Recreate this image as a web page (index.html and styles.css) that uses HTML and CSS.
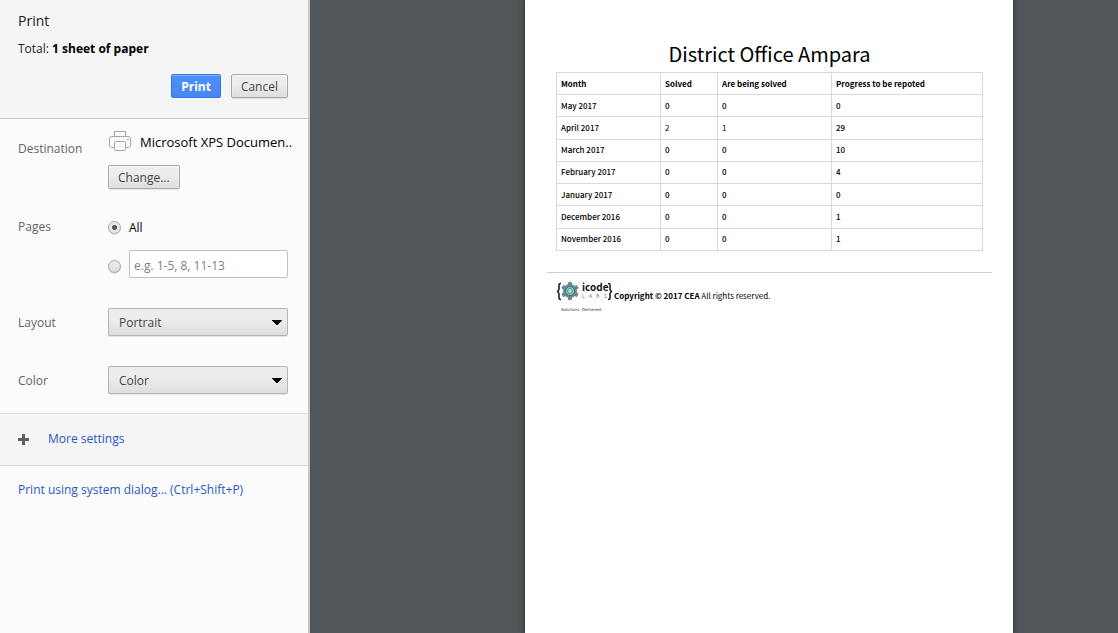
FILE: index.html
```html
<!DOCTYPE html>
<html lang="en">
<head>
<meta charset="utf-8">
<title>Print</title>
<link rel="stylesheet" href="styles.css">
</head>
<body>
<div class="app">
  <aside class="sidebar">
    <header class="summary">
      <h1 class="title">Print</h1>
      <p class="total">Total: <b>1 sheet of paper</b></p>
      <div class="actions">
        <button class="btn primary" type="button">Print</button>
        <button class="btn" type="button">Cancel</button>
      </div>
    </header>
    <form class="settings">
      <section class="row destination">
        <h2 class="label">Destination</h2>
        <div class="field">
          <div class="printer">
            <svg class="printer-icon" width="24" height="24" viewBox="0 0 24 24" fill="#fbfbfb" stroke="#a6a6a6" aria-hidden="true">
              <path d="M6.500 6.500v-5h11v5"/>
              <rect x="1.500" y="6.500" width="21" height="11" rx="2"/>
              <rect x="6.500" y="11.500" width="11" height="9" rx="1"/>
              <path d="M19 9.500h2"/>
            </svg>
            <span>Microsoft XPS Documen..</span>
          </div>
          <button class="btn" type="button">Change...</button>
        </div>
      </section>
      <section class="row pages">
        <h2 class="label">Pages</h2>
        <div class="field">
          <label class="choice all"><input class="radio" type="radio" name="pages" checked><span>All</span></label>
          <div class="choice range">
            <input class="radio" type="radio" name="pages" aria-label="Page range">
            <input class="text" type="text" placeholder="e.g. 1-5, 8, 11-13" aria-label="Pages to print">
          </div>
        </div>
      </section>
      <section class="row choose">
        <label class="label" for="layout">Layout</label>
        <select class="select" id="layout"><option>Portrait</option><option>Landscape</option></select>
      </section>
      <section class="row choose">
        <label class="label" for="color">Color</label>
        <select class="select" id="color"><option>Color</option><option>Black and white</option></select>
      </section>
    </form>
    <div class="more">
      <svg width="11" height="11" viewBox="0 0 11 11" fill="#5f5f5f" aria-hidden="true"><path d="M4 0h3v4h4v3H7v4H4V7H0V4h4z"/></svg>
      <a href="#more">More settings</a>
    </div>
    <div class="system"><a href="#system">Print using system dialog... (Ctrl+Shift+P)</a></div>
  </aside>
  <main class="preview">
    <article class="sheet">
      <h2 class="heading">District Office Ampara</h2>
      <table class="report">
        <colgroup><col class="c-month"><col class="c-solved"><col class="c-being"><col></colgroup>
        <thead><tr><th>Month</th><th>Solved</th><th>Are being solved</th><th>Progress to be repoted</th></tr></thead>
        <tbody>
          <tr><td>May 2017</td><td>0</td><td>0</td><td>0</td></tr>
          <tr><td>April 2017</td><td class="thin">2</td><td class="thin">1</td><td>29</td></tr>
          <tr><td>March 2017</td><td>0</td><td>0</td><td>10</td></tr>
          <tr><td>February 2017</td><td>0</td><td>0</td><td>4</td></tr>
          <tr><td>January 2017</td><td>0</td><td>0</td><td>0</td></tr>
          <tr><td>December 2016</td><td>0</td><td>0</td><td>1</td></tr>
          <tr><td>November 2016</td><td>0</td><td>0</td><td>1</td></tr>
        </tbody>
      </table>
      <footer class="foot">
        <svg class="logo" width="57" height="36" viewBox="0 -4 57 36" aria-label="icode labs">
          <g fill="none" stroke="#222" stroke-width="1.600">
            <path d="M5 1.500H4.500Q3 1.500 3 3v4Q3 9 1 9.500Q3 10 3 12v4Q3 17.500 4.500 17.500H5"/>
            <path d="M52 1.500h.5Q54 1.500 54 3v4q0 2 2 2.500q-2 .5-2 2.500v4q0 1.500-1.500 1.500H52"/>
          </g>
          <g transform="translate(14 9)">
            <g fill="#6f8791">
              <circle r="7"/>
              <rect x="-2" y="-9" width="4" height="18" rx="1"/>
              <rect x="-2" y="-9" width="4" height="18" rx="1" transform="rotate(60)"/>
              <rect x="-2" y="-9" width="4" height="18" rx="1" transform="rotate(120)"/>
            </g>
            <circle r="4.500" fill="#78d8c6" stroke="#4c666c" stroke-width="1"/>
            <circle r="2.500" fill="#a4ded5" stroke="#66908f" stroke-width="1"/>
          </g>
          <text class="logo-name" x="26" y="9">icode</text>
          <text class="logo-sub" y="16"><tspan x="26">L</tspan><tspan x="33">A</tspan><tspan x="40">B</tspan><tspan x="48">S</tspan></text>
          <text class="logo-tag" x="5" y="29">Solutions. Delivered.</text>
        </svg>
        <p class="copy"><b>Copyright © 2017 CEA</b> All rights reserved.</p>
      </footer>
    </article>
  </main>
</div>
</body>
</html>
```
FILE: styles.css
```css
* { box-sizing: border-box; }
body { margin: 0; font-family: "Open Sans", "Noto Sans", sans-serif; font-size: 12px; line-height: 16px; color: #222; }
h1, h2, p { margin: 0; font-weight: 400; }
a { color: #2a56c6; text-decoration: none; }
button, input, select { font: inherit; margin: 0; }
.app { display: flex; min-height: 100vh; }
.sidebar { width: 310px; flex: none; background: #fbfbfb; border-right: 2px solid #c8c8c8; }
.summary { background: #f5f5f5; border-bottom: 1px solid #c8c8c8; padding: 11px 20px 20px 18px; }
.title { font-size: 14px; line-height: 20px; }
.total { margin: 10px 0 17px; }
.total b { color: #000; }
.actions { display: flex; justify-content: flex-end; gap: 10px; }
.btn { height: 24px; padding: 2px 9px 0; border: 1px solid #a8a8a8; border-radius: 2px; background: linear-gradient(#ededed, #ededed 38%, #dedede); color: #444; box-shadow: 0 1px 0 rgba(0,0,0,.08), inset 0 1px 2px rgba(255,255,255,.75); }
.primary { background: linear-gradient(#4d90fe, #4787ed); border-color: #3079ed; color: #fff; font-weight: 700; box-shadow: inset 0 1px 0 rgba(255,255,255,.3); }
.settings { padding: 10px 20px 19px 18px; }
.row { display: grid; grid-template-columns: 90px minmax(0, 1fr); }
.label { color: #646464; font-size: 12px; }
.destination .label { padding-top: 12px; }
.printer { display: flex; align-items: center; gap: 8px; height: 26px; margin-bottom: 10px; font-size: 13px; white-space: nowrap; color: #000; }
.printer-icon { flex: none; }
.pages { margin-top: 30px; }
.choice { display: flex; align-items: center; }
.all { height: 16px; gap: 8px; color: #000; }
.all span { padding-top: 2px; }
.range { margin-top: 15px; gap: 8px; }
.range .radio { margin-top: 4px; }
.radio { appearance: none; flex: none; width: 13px; height: 13px; border: 1px solid #a6a6a6; border-radius: 50%; background: linear-gradient(#ededed, #dedede); box-shadow: 0 1px 1px rgba(0,0,0,.12); }
.radio:checked { background: radial-gradient(circle, #555 0 2px, #e8e8e8 3px); }
.text { flex: 1; min-width: 0; height: 28px; padding: 2px 4px 0; border: 1px solid #bfbfbf; border-radius: 2px; background: #fff; }
.text::placeholder { color: #808080; }
.choose { align-items: center; margin-top: 30px; }
.choose .label { padding-top: 2px; }
.select { appearance: none; width: 100%; height: 28px; padding: 2px 10px 0; border: 1px solid #b4b4b4; border-radius: 2px; color: #444; background: conic-gradient(from 315deg at 50% 100%, #000 90deg, transparent 0) right 5px top 11px / 10px 5px no-repeat, linear-gradient(#ededed, #ededed 38%, #dedede); box-shadow: 0 1px 0 rgba(0,0,0,.08); }
.more { display: flex; align-items: center; gap: 19px; height: 53px; padding: 0 18px; background: #f5f5f5; border: solid #dedede; border-width: 1px 0; }
.more a { padding-bottom: 2px; }
.system { padding: 16px 18px; }
.preview { flex: 1; min-width: 0; display: flex; padding: 0 105px 0 215px; background: #525659; }
.sheet { flex: 1; min-width: 0; padding: 38px 21px 0 22px; background: #fff; box-shadow: 0 0 4px 1px #33363a; font-family: "Noto Sans CJK SC", sans-serif; font-size: 8px; line-height: 12px; color: #000; }
.heading { margin-bottom: 2px; font-size: 20px; line-height: 32px; text-align: center; }
.report { width: calc(100% - 18px); margin-left: 9px; table-layout: fixed; border-collapse: collapse; height: 179px; }
.report tr { height: 22px; }
.c-month { width: 104px; }
.c-solved { width: 57px; }
.c-being { width: 114px; }
.report th, .report td { border: 1px solid #d8d8d8; padding: 0 4px; text-align: left; font-weight: 500; }
.report th { font-weight: 700; }
.report .thin { font-weight: 400; }
.foot { display: flex; align-items: flex-start; gap: 1px; margin-top: 21px; padding: 5px 9px; border-top: 1px solid #cbd2dc; }
.logo { flex: none; overflow: visible; }
.copy { padding-top: 12px; }
.logo-name { font-size: 10px; font-weight: 700; fill: #111; }
.logo-sub { font-size: 5px; fill: #777; }
.logo-tag { font-size: 4px; font-family: "DejaVu Sans", sans-serif; fill: #333; }
```
